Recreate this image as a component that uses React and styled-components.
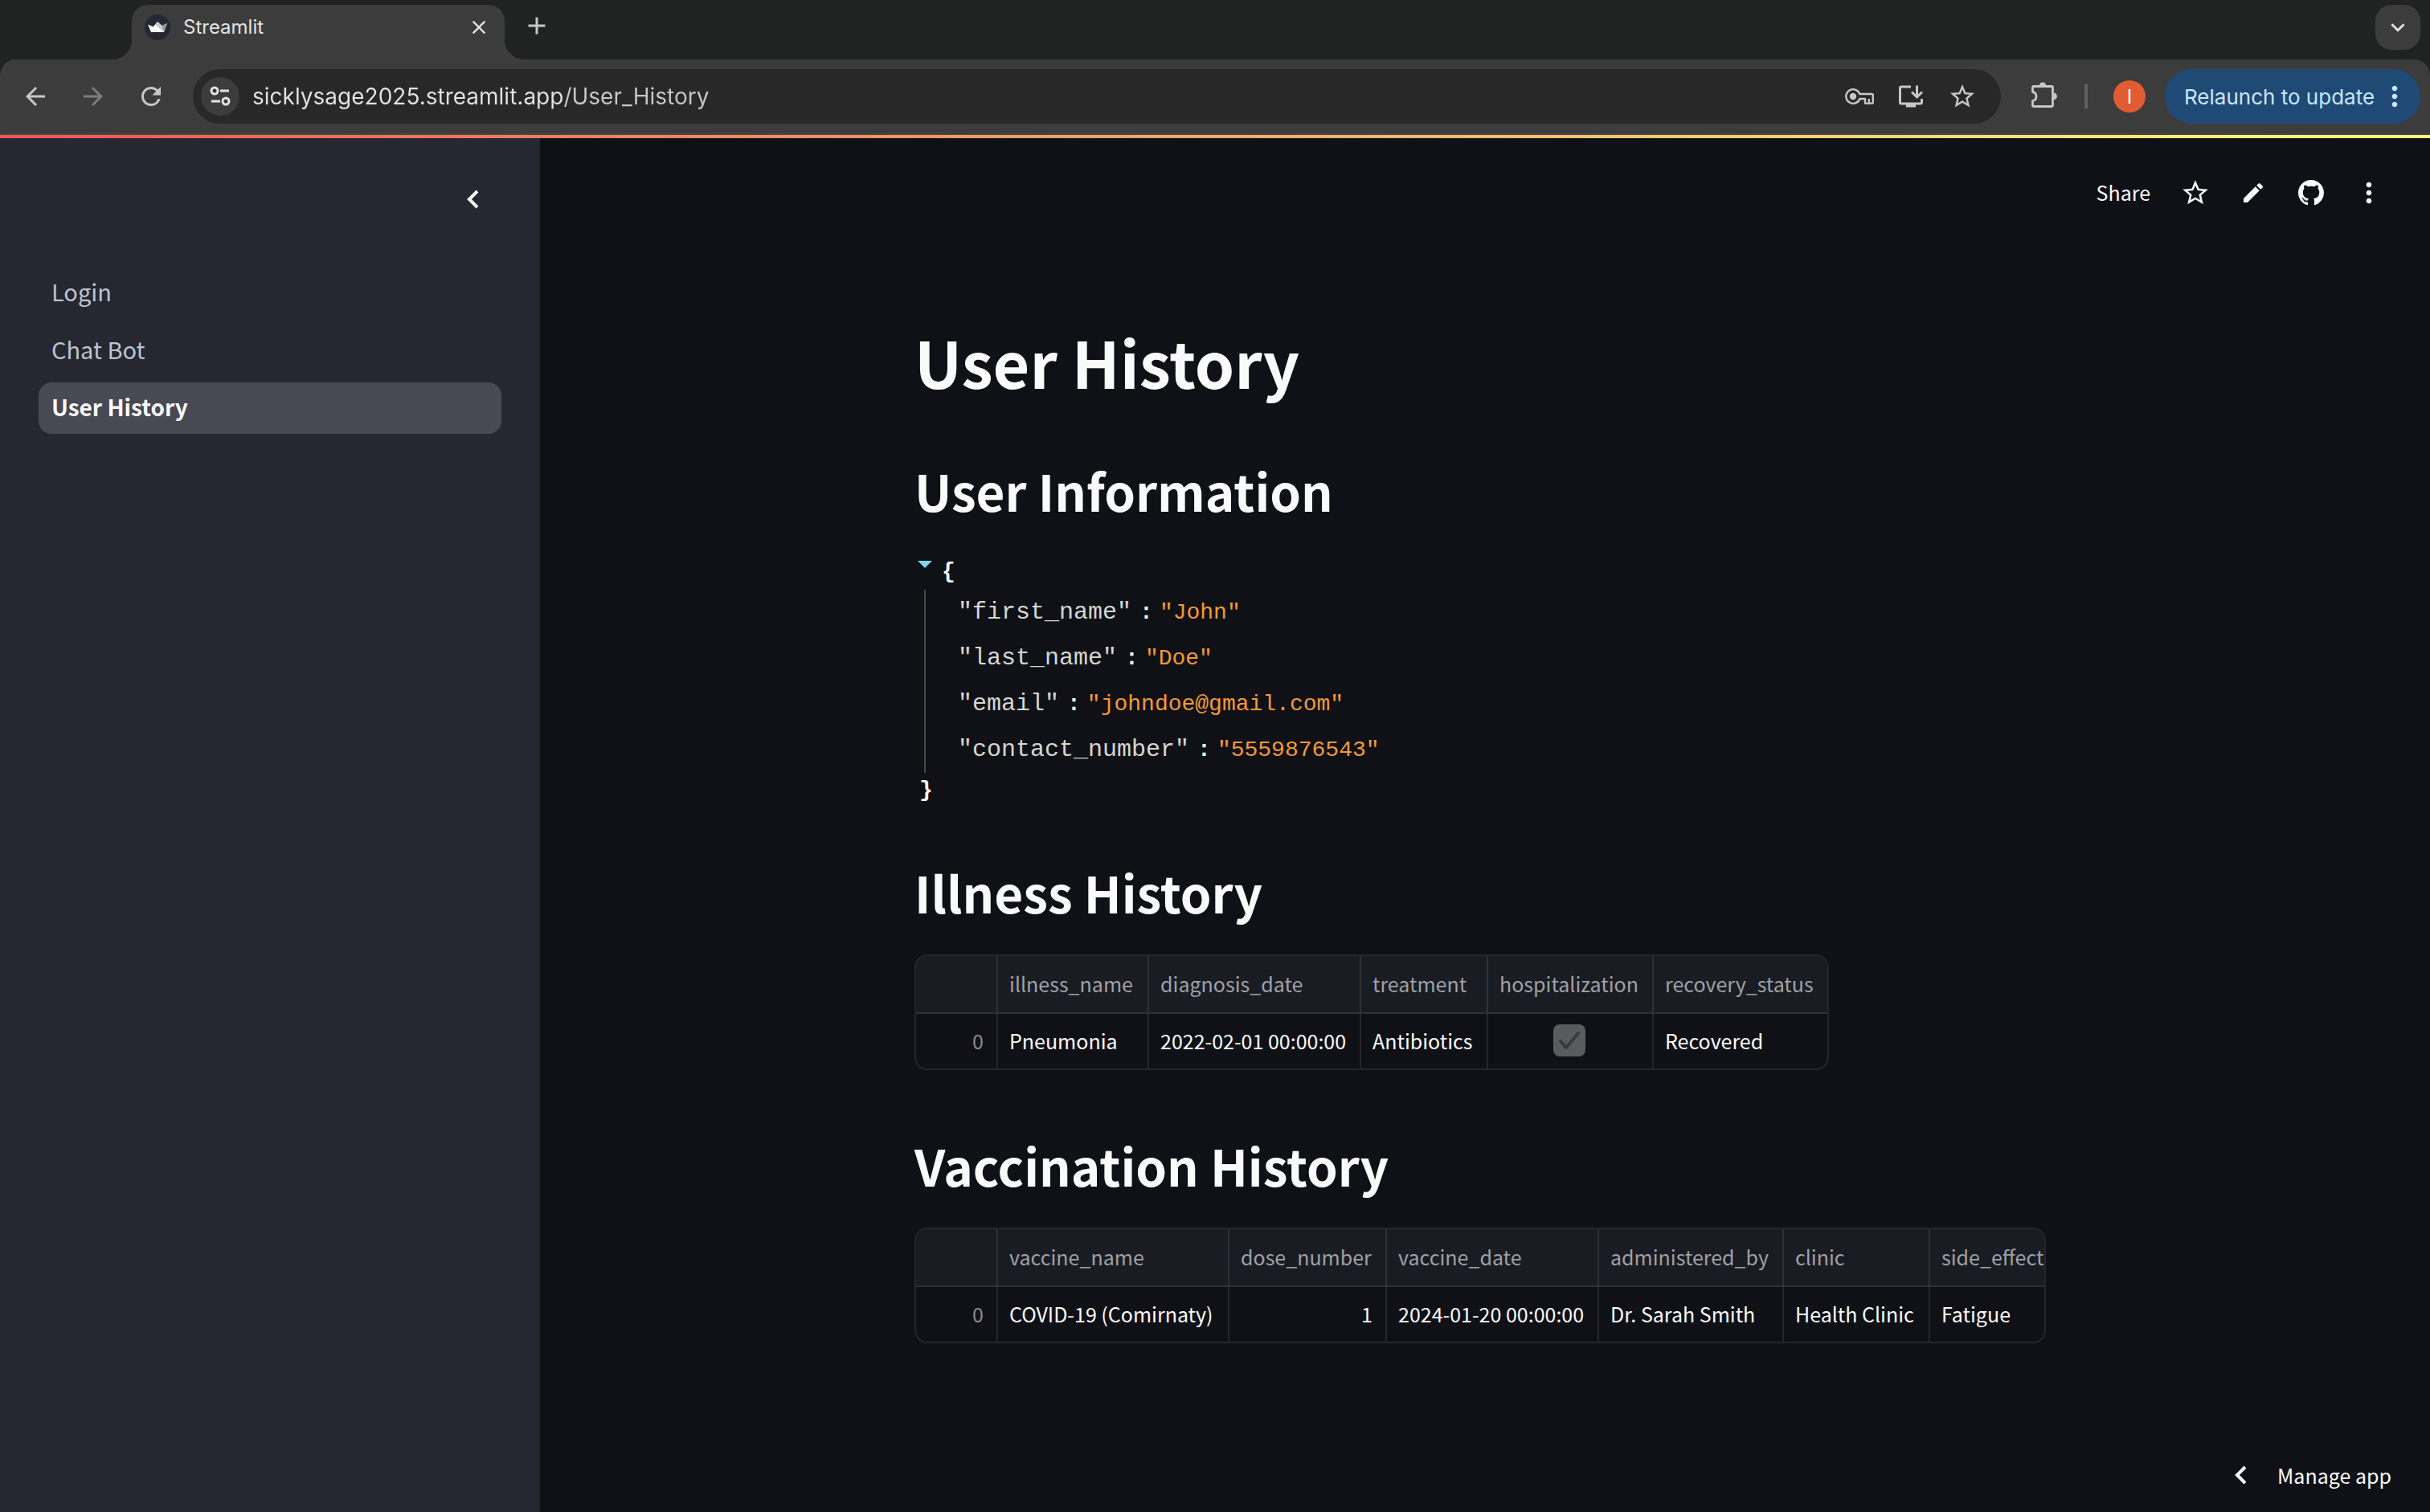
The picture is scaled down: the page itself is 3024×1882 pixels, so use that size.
import React from 'react';
import styled, { createGlobalStyle } from 'styled-components';
import {
  MdAdd,
  MdArrowBack,
  MdArrowForward,
  MdClose,
  MdEdit,
  MdKeyboardArrowDown,
  MdMoreVert,
  MdOutlineInstallDesktop,
  MdRefresh,
  MdStarBorder,
} from 'react-icons/md';

const user = {
  first_name: 'John',
  last_name: 'Doe',
  email: 'johndoe@gmail.com',
  contact_number: '5559876543',
};

const illnessColumns = [
  { name: 'illness_name', width: 188 },
  { name: 'diagnosis_date', width: 264 },
  { name: 'treatment', width: 158 },
  { name: 'hospitalization', width: 206 },
  { name: 'recovery_status', width: 216 },
];
const illnesses = [
  {
    illness_name: 'Pneumonia',
    diagnosis_date: '2022-02-01 00:00:00',
    treatment: 'Antibiotics',
    hospitalization: true,
    recovery_status: 'Recovered',
  },
];

const vaccineColumns = [
  { name: 'vaccine_name', width: 288 },
  { name: 'dose_number', width: 196 },
  { name: 'vaccine_date', width: 264 },
  { name: 'administered_by', width: 230 },
  { name: 'clinic', width: 182 },
  { name: 'side_effect', width: 142 },
];
const vaccines = [
  {
    vaccine_name: 'COVID-19 (Comirnaty)',
    dose_number: 1,
    vaccine_date: '2024-01-20 00:00:00',
    administered_by: 'Dr. Sarah Smith',
    clinic: 'Health Clinic',
    side_effect: 'Fatigue',
  },
];

const pages = ['Login', 'Chat Bot', 'User History'];

const CrownIcon = () => (
  <svg width="32" height="32" viewBox="0 0 32 32" aria-hidden="true">
    <circle cx="16" cy="16" r="16" fill="#262730" />
    <path d="M4 12.5l6.6 2.8L16 9l5.6 5L28 11l-4 11H8z" fill="#fff" />
    <path d="M21.6 14L28 11l-4 11z" fill="#8f929c" />
    <path d="M16 9l5.6 5L24 22l-11-9.6z" fill="#c8cad0" />
  </svg>
);

const TuneIcon = () => (
  <svg
    width="28"
    height="28"
    viewBox="0 0 28 28"
    fill="none"
    stroke="#e3e3e3"
    strokeWidth="3"
    aria-hidden="true"
  >
    <circle cx="7" cy="7" r="4" />
    <path d="M14 7h11M3 20h11" />
    <circle cx="21" cy="20" r="4" />
  </svg>
);

const KeyIcon = () => (
  <svg
    width="36"
    height="20"
    viewBox="0 0 36 20"
    fill="none"
    stroke="#c7c7c7"
    strokeWidth="2.4"
    strokeLinejoin="round"
    aria-hidden="true"
  >
    <path d="M18.4 7A8.8 8.8 0 1 0 18.4 13H25v5.6h8.4q1.4 0 1.4-1.4V8.4Q34.800 7 33.400 7z" />
    <path d="M29.800 18v-5" />
    <circle cx="10" cy="10" r="4.200" fill="#c7c7c7" stroke="none" />
  </svg>
);

const PuzzleIcon = () => (
  <svg width="36" height="36" viewBox="0 0 36 36" aria-hidden="true">
    <path
      d="M5 5.500h22q1.500 0 1.500 1.500v22q0 1.500-1.500 1.500H5q-1.500 0-1.500-1.500v-5.500c6-1 6-10 0-11V7q0-1.500 1.500-1.500z"
      fill="none"
      stroke="#c7c7c7"
      strokeWidth="2.800"
      strokeLinejoin="round"
    />
    <path d="M12 4.500a4 4 0 0 1 8 0zM29.500 13.500a4.400 4.400 0 0 1 0 8.800z" fill="#c7c7c7" />
  </svg>
);

const ChevronLeft = () => (
  <svg
    width="16"
    height="24"
    viewBox="0 0 16 24"
    fill="none"
    stroke="#fff"
    strokeWidth="4"
    aria-hidden="true"
  >
    <path d="M14 2L4 12l10 10" />
  </svg>
);

const GithubIcon = () => (
  <svg width="32" height="32" viewBox="0 0 16 16" fill="#fafafa" aria-hidden="true">
    <path d="M8 0C3.58 0 0 3.58 0 8c0 3.54 2.29 6.53 5.47 7.59.4.07.55-.17.55-.38 0-.19-.01-.82-.01-1.49-2.01.37-2.53-.49-2.69-.94-.09-.23-.48-.94-.82-1.13-.28-.15-.68-.52-.01-.53.63-.01 1.08.58 1.23.82.72 1.21 1.87.87 2.33.66.07-.52.28-.87.51-1.07-1.78-.2-3.64-.89-3.64-3.95 0-.87.31-1.59.82-2.15-.08-.2-.36-1.02.08-2.12 0 0 .67-.21 2.2.82.64-.18 1.32-.27 2-.27.68 0 1.36.09 2 .27 1.53-1.04 2.2-.82 2.2-.82.44 1.1.16 1.92.08 2.12.51.56.82 1.27.82 2.15 0 3.07-1.87 3.75-3.65 3.95.29.25.54.73.54 1.48 0 1.07-.01 1.93-.01 2.2 0 .21.15.46.55.38A8.013 8.013 0 0016 8c0-4.42-3.58-8-8-8z" />
  </svg>
);

const BrowserBar = () => (
  <Browser>
    <TabStrip>
      <Tab>
        <CrownIcon />
        <TabTitle>Streamlit</TabTitle>
        <IconButton $size={28} $color="#e3e3e3" aria-label="Close tab">
          <MdClose size={28} />
        </IconButton>
      </Tab>
      <NewTab $size={36} aria-label="New tab">
        <MdAdd size={36} />
      </NewTab>
      <TabSearch aria-label="Search tabs">
        <MdKeyboardArrowDown size={34} />
      </TabSearch>
    </TabStrip>
    <Toolbar>
      <NavButtons>
        <IconButton $size={36} aria-label="Back">
          <MdArrowBack size={36} />
        </IconButton>
        <IconButton $size={36} $color="#7c7c7c" aria-label="Forward">
          <MdArrowForward size={36} />
        </IconButton>
        <IconButton $size={36} aria-label="Reload">
          <MdRefresh size={36} />
        </IconButton>
      </NavButtons>
      <Omnibox>
        <SiteInfo type="button" aria-label="Site information">
          <TuneIcon />
        </SiteInfo>
        <Address
          type="text"
          aria-label="Address"
          defaultValue="sicklysage2025.streamlit.app/User_History"
        />
        <OmniboxActions>
          <IconButton type="button" $size={40} aria-label="Passwords">
            <KeyIcon />
          </IconButton>
          <IconButton type="button" $size={40} aria-label="Install app">
            <MdOutlineInstallDesktop size={36} />
          </IconButton>
          <IconButton type="button" $size={40} aria-label="Bookmark">
            <MdStarBorder size={36} />
          </IconButton>
        </OmniboxActions>
      </Omnibox>
      <IconButton $size={36} aria-label="Extensions">
        <PuzzleIcon />
      </IconButton>
      <Divider />
      <Avatar aria-label="Profile">I</Avatar>
      <Relaunch>
        Relaunch to update
        <MdMoreVert size={40} />
      </Relaunch>
    </Toolbar>
  </Browser>
);

const JsonView = ({ data }) => (
  <Json>
    <Brace>
      <Caret aria-label="Collapse" />
      {'{'}
    </Brace>
    <JsonBody>
      {Object.keys(data).map((key) => (
        <JsonRow key={key}>
          <JsonKey>"{key}"</JsonKey>
          <Colon>:</Colon>
          <JsonValue>"{data[key]}"</JsonValue>
        </JsonRow>
      ))}
    </JsonBody>
    <Brace $closing>{'}'}</Brace>
  </Json>
);

const Cell = ({ name, value }) => {
  if (typeof value === 'boolean') {
    return (
      <Td $align="center">
        <CheckWrap>
          <Checkbox type="checkbox" checked={value} disabled readOnly aria-label={name} />
          <svg width="28" height="28" viewBox="0 0 28 28" fill="none" aria-hidden="true">
            <path
              d="M3 15l7 8L25 5"
              stroke="#393a3e"
              strokeWidth="4"
              strokeLinecap="round"
              strokeLinejoin="round"
            />
          </svg>
        </CheckWrap>
      </Td>
    );
  }
  return <Td $align={typeof value === 'number' ? 'right' : 'left'}>{value}</Td>;
};

const DataFrame = ({ columns, rows }) => (
  <Frame>
    <Table>
      <colgroup>
        <Col $width={102} />
        {columns.map((col) => (
          <Col key={col.name} $width={col.width} />
        ))}
      </colgroup>
      <thead>
        <tr>
          <Th aria-label="index" />
          {columns.map((col) => (
            <Th key={col.name} scope="col">
              {col.name}
            </Th>
          ))}
        </tr>
      </thead>
      <tbody>
        {rows.map((row, i) => (
          <tr key={i}>
            <Td $align="right" $muted>
              {i}
            </Td>
            {columns.map((col) => (
              <Cell key={col.name} name={col.name} value={row[col.name]} />
            ))}
          </tr>
        ))}
      </tbody>
    </Table>
  </Frame>
);

const App = () => (
  <Page>
    <GlobalStyle />
    <BrowserBar />
    <Decoration />
    <Body>
      <Sidebar>
        <SidebarHeader>
          <IconButton $size={40} aria-label="Collapse sidebar">
            <ChevronLeft />
          </IconButton>
        </SidebarHeader>
        <Nav>
          {pages.map((page) => (
            <NavLink key={page} href="#" $active={page === 'User History'}>
              {page}
            </NavLink>
          ))}
        </Nav>
      </Sidebar>
      <Main>
        <AppHeader>
          <ShareButton>Share</ShareButton>
          <IconButton $size={40} $color="#fafafa" aria-label="Favorite">
            <MdStarBorder size={38} />
          </IconButton>
          <IconButton $size={40} $color="#fafafa" aria-label="Edit">
            <MdEdit size={32} />
          </IconButton>
          <IconButton $size={40} $color="#fafafa" aria-label="View on GitHub">
            <GithubIcon />
          </IconButton>
          <IconButton $size={40} $color="#fafafa" aria-label="More">
            <MdMoreVert size={40} />
          </IconButton>
        </AppHeader>
        <Content>
          <Title>User History</Title>
          <Section $top={72}>
            <Heading>User Information</Heading>
            <JsonView data={user} />
          </Section>
          <Section $top={64}>
            <Heading>Illness History</Heading>
            <DataFrame columns={illnessColumns} rows={illnesses} />
          </Section>
          <Section $top={78}>
            <Heading>Vaccination History</Heading>
            <DataFrame columns={vaccineColumns} rows={vaccines} />
          </Section>
        </Content>
        <AppFooter>
          <ManageButton>
            <ChevronLeft />
            Manage app
          </ManageButton>
        </AppFooter>
      </Main>
    </Body>
  </Page>
);

export default App;

const GlobalStyle = createGlobalStyle`
  * {
    box-sizing: border-box;
  }
  body {
    margin: 0;
    background: #101116;
    color: #fafafa;
    font-family: 'Noto Sans CJK SC', 'Open Sans', sans-serif;
  }
  button, input {
    font: inherit;
    color: inherit;
    border: none;
    background: none;
    padding: 0;
    margin: 0;
  }
  svg {
    display: block;
    flex: none;
  }
`;

const Page = styled.div`
  display: flex;
  flex-direction: column;
  min-height: 100vh;
`;
const IconButton = styled.button`
  display: flex;
  align-items: center;
  justify-content: center;
  flex: none;
  width: ${(props) => props.$size}px;
  height: ${(props) => props.$size}px;
  color: ${(props) => props.$color || '#c7c7c7'};
`;

/* browser */
const Browser = styled.header`
  background: #202322;
  font-family: Inter, sans-serif;
`;
const TabStrip = styled.div`
  display: flex;
  align-items: flex-start;
  height: 74px;
  padding: 6px 12px 0 164px;
`;
const Tab = styled.div`
  position: relative;
  display: flex;
  align-items: center;
  align-self: stretch;
  width: 464px;
  margin-right: 22px;
  padding: 0 18px 12px 16px;
  border-radius: 20px 20px 0 0;
  background: #3c3c3c;
  &::before,
  &::after {
    content: '';
    position: absolute;
    bottom: 0;
    width: 24px;
    height: 24px;
  }
  &::before {
    right: 100%;
    background: radial-gradient(circle at 0 0, transparent 24px, #3c3c3c 24px);
  }
  &::after {
    left: 100%;
    background: radial-gradient(circle at 100% 0, transparent 24px, #3c3c3c 24px);
  }
`;
const TabTitle = styled.span`
  flex: 1;
  margin-left: 16px;
  font-size: 24px;
  line-height: 32px;
  color: #e3e3e3;
`;
const NewTab = styled(IconButton)`
  height: 52px;
`;
const TabSearch = styled.button`
  display: flex;
  align-items: center;
  justify-content: center;
  width: 56px;
  height: 56px;
  margin-left: auto;
  border-radius: 20px;
  background: #3c3c3c;
  color: #e3e3e3;
`;
const Toolbar = styled.div`
  display: flex;
  align-items: center;
  height: 94px;
  padding: 0 12px 0 26px;
  border-bottom: 2px solid #484848;
  border-radius: 20px 20px 0 0;
  background: #3c3c3c;
`;
const NavButtons = styled.div`
  display: flex;
  gap: 36px;
  margin-right: 34px;
`;
const Omnibox = styled.form`
  display: flex;
  flex: 1;
  align-items: center;
  height: 68px;
  margin-right: 36px;
  padding: 0 28px 0 10px;
  border-radius: 34px;
  background: #282828;
`;
const SiteInfo = styled.button`
  display: flex;
  align-items: center;
  justify-content: center;
  width: 48px;
  height: 48px;
  border-radius: 50%;
  background: #3c3c3c;
`;
/* the host is brighter than the path */
const Address = styled.input`
  flex: 1;
  margin-left: 16px;
  font-size: 28px;
  line-height: 40px;
  outline: none;
  color: transparent;
  background: linear-gradient(90deg, #e3e3e3 388px, #c7c7c7 388px);
  background-clip: text;
`;
const OmniboxActions = styled.div`
  display: flex;
  gap: 24px;
`;
const Divider = styled.span`
  width: 4px;
  height: 32px;
  margin: 0 32px;
  border-radius: 2px;
  background: #5f5f5f;
`;
const Avatar = styled.button`
  width: 40px;
  height: 40px;
  margin-right: 24px;
  border-radius: 50%;
  background: #e25c33;
  color: #fff;
  font-size: 24px;
`;
const Relaunch = styled.button`
  display: flex;
  align-items: center;
  justify-content: space-between;
  height: 68px;
  width: 318px;
  padding: 0 12px 0 24px;
  border-radius: 34px;
  background: #1f4a75;
  color: #c9e6ff;
  font-size: 26px;
  white-space: nowrap;
`;

/* app */
const Decoration = styled.div`
  height: 4px;
  background: linear-gradient(90deg, #f05654, #fffd80);
`;
const Body = styled.div`
  display: flex;
  flex: 1;
`;
const Sidebar = styled.aside`
  flex: none;
  width: 672px;
  padding: 0 48px;
  background: #262730;
`;
const SidebarHeader = styled.div`
  display: flex;
  justify-content: flex-end;
  padding: 56px 16px 64px 0;
`;
const Nav = styled.nav`
  display: flex;
  flex-direction: column;
  gap: 8px;
`;
const NavLink = styled.a`
  padding: 10px 16px 14px;
  border-radius: 16px;
  background: ${(props) => (props.$active ? '#484953' : 'transparent')};
  color: ${(props) => (props.$active ? '#fafafa' : '#bdc3d0')};
  font-size: ${(props) => (props.$active ? 28 : 29)}px;
  line-height: 40px;
  font-weight: ${(props) => (props.$active ? 'bold' : 'normal')};
  text-decoration: none;
`;
const Main = styled.main`
  display: flex;
  flex: 1;
  flex-direction: column;
  min-width: 0;
`;
const AppHeader = styled.div`
  display: flex;
  align-items: center;
  justify-content: flex-end;
  gap: 32px;
  height: 136px;
  padding-right: 56px;
`;
const ShareButton = styled.button`
  margin-right: 4px;
  padding-bottom: 2px;
  font-size: 25px;
  line-height: 40px;
`;
const Content = styled.div`
  display: flex;
  flex-direction: column;
  width: 100%;
  max-width: 1420px;
  margin: 0 auto;
  padding: 94px 12px 60px 0;
`;
const Title = styled.h1`
  margin: 0;
  font-size: 79px;
  line-height: 96px;
  font-weight: bold;
`;
const Heading = styled.h2`
  margin: 0;
  font-size: 62px;
  line-height: 80px;
  font-weight: bold;
`;
const Section = styled.section`
  display: flex;
  flex-direction: column;
  align-items: flex-start;
  gap: 38px;
  margin-top: ${(props) => props.$top}px;
`;
const Json = styled.div`
  padding-top: 2px;
  font-family: 'Liberation Mono', monospace;
  font-size: 28px;
`;
const Brace = styled.div`
  display: flex;
  align-items: center;
  gap: 12px;
  padding-left: ${(props) => (props.$closing ? 6 : 4)}px;
  line-height: 44px;
  font-weight: bold;
`;
const Caret = styled.button`
  align-self: flex-start;
  margin-top: 8px;
  border-top: 9px solid #81d4ec;
  border-left: 9px solid transparent;
  border-right: 9px solid transparent;
`;
const JsonBody = styled.div`
  margin-left: 12px;
  padding-left: 40px;
  border-left: 2px solid #49483e;
`;
const JsonRow = styled.div`
  display: flex;
  line-height: 57px;
`;
const JsonKey = styled.span`
  font-size: 30px;
  color: #d6d6d2;
`;
const Colon = styled.span`
  margin: 0 8px 0 10px;
  font-weight: bold;
`;
const JsonValue = styled.span`
  color: #f19a38;
`;
const Frame = styled.div`
  max-width: 100%;
  overflow: hidden;
  border: 2px solid #26272b;
  border-radius: 16px;
`;
const Table = styled.table`
  border-collapse: separate;
  border-spacing: 0;
  font-size: 25px;
  line-height: 36px;
  white-space: nowrap;
`;
const Col = styled.col`
  width: ${(props) => props.$width}px;
`;
const Th = styled.th`
  height: 72px;
  padding: 0 0 2px 14px;
  border-right: 2px solid #303137;
  border-bottom: 2px solid #303137;
  background: #1a1c24;
  color: #a0a0a4;
  font-weight: normal;
  text-align: left;
  &:last-child {
    border-right: none;
  }
`;
const Td = styled.td`
  height: 68px;
  padding: 0 ${(props) => (props.$align === 'left' ? 14 : 16)}px 2px 14px;
  border-right: 2px solid #26272b;
  color: ${(props) => (props.$muted ? '#8a8a8e' : '#fafafa')};
  text-align: ${(props) => props.$align};
  &:last-child {
    border-right: none;
  }
`;
const CheckWrap = styled.label`
  display: grid;
  justify-content: center;
  align-items: center;
  justify-items: center;
  > * {
    grid-area: 1 / 1;
  }
`;
const Checkbox = styled.input`
  appearance: none;
  width: 40px;
  height: 40px;
  border-radius: 8px;
  background: #5a5b5f;
`;
const AppFooter = styled.footer`
  display: flex;
  justify-content: flex-end;
  margin-top: auto;
  padding: 0 48px 26px 0;
`;
const ManageButton = styled.button`
  display: flex;
  align-items: center;
  gap: 38px;
  font-size: 25px;
  line-height: 40px;
`;
